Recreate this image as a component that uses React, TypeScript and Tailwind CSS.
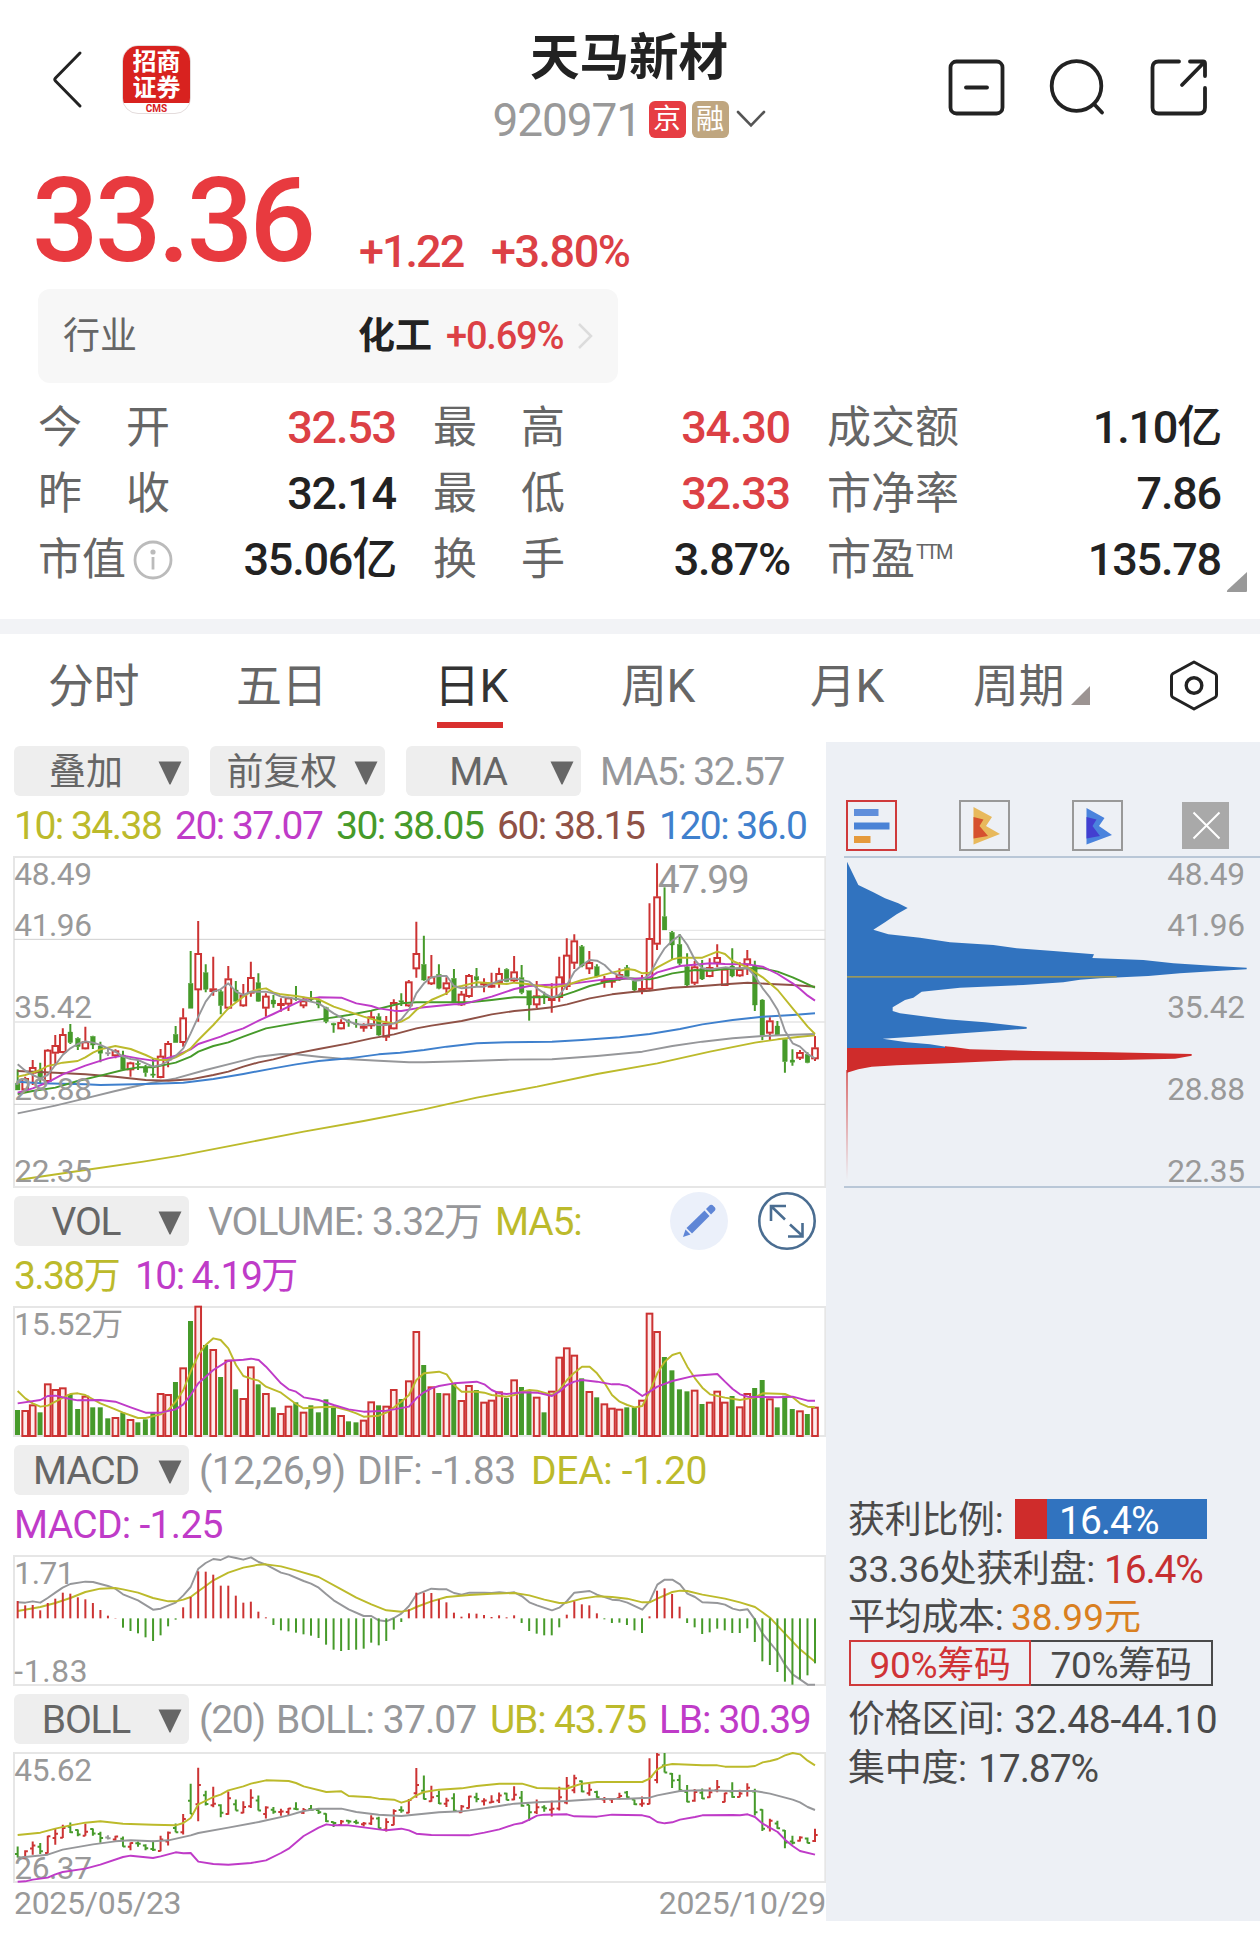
import type { ReactNode } from "react";

// [direction, high, low, body top, body bottom], chart units
type Candle = ["r" | "g" | "n", number, number, number, number];
type Point = [number, number];

const candles: Candle[] = [
  ["g", 1018, 1080, 1060, 1080], ["r", 1040, 1085, 1045, 1080], ["r", 990, 1065, 1012, 1030], ["g", 998, 1060, 1020, 1045],
  ["r", 958, 1058, 960, 1055], ["r", 915, 1008, 946, 970], ["r", 895, 970, 913, 968], ["g", 882, 942, 906, 938],
  ["g", 922, 960, 925, 950], ["r", 890, 958, 935, 957], ["g", 917, 957, 919, 945], ["g", 935, 997, 948, 970],
  ["n", 955, 978, 967, 972], ["r", 958, 985, 962, 978], ["g", 962, 1020, 975, 1018], ["r", 995, 1040, 998, 1020],
  ["g", 990, 1020, 1000, 1003], ["g", 1005, 1040, 1012, 1028], ["g", 985, 1043, 1032, 1036], ["r", 957, 1045, 978, 1043],
  ["r", 933, 1012, 940, 990], ["g", 888, 938, 913, 938], ["r", 835, 950, 863, 938], ["g", 663, 835, 760, 835],
  ["r", 573, 875, 670, 780], ["g", 703, 787, 728, 778], ["r", 680, 797, 776, 785], ["g", 780, 853, 785, 827],
  ["r", 708, 838, 746, 835], ["g", 753, 815, 780, 814], ["r", 762, 830, 795, 828], ["r", 695, 800, 742, 790],
  ["g", 730, 815, 758, 814], ["r", 790, 860, 798, 835], ["g", 795, 833, 810, 822], ["r", 805, 845, 820, 823],
  ["r", 800, 843, 803, 823], ["g", 768, 812, 805, 808], ["r", 800, 835, 812, 828], ["g", 783, 815, 806, 810],
  ["g", 805, 835, 812, 825], ["g", 830, 880, 833, 875], ["g", 878, 908, 880, 885], ["r", 868, 898, 877, 897],
  ["g", 868, 890, 873, 877], ["g", 867, 893, 880, 884], ["r", 880, 905, 888, 893], ["r", 842, 897, 860, 888],
  ["g", 850, 917, 860, 915], ["r", 858, 933, 880, 922], ["r", 808, 898, 817, 897], ["g", 790, 828, 812, 815],
  ["r", 750, 830, 755, 828], ["r", 575, 743, 670, 717], ["g", 617, 752, 703, 750], ["r", 675, 765, 740, 762],
  ["g", 703, 778, 733, 775], ["r", 742, 795, 758, 777], ["g", 717, 818, 745, 816], ["r", 783, 828, 792, 825],
  ["r", 732, 803, 736, 800], ["g", 714, 768, 740, 750], ["r", 745, 787, 758, 762], ["r", 728, 773, 765, 770],
  ["r", 713, 773, 730, 758], ["g", 715, 757, 718, 755], ["r", 678, 757, 725, 753], ["g", 705, 793, 743, 788],
  ["g", 782, 872, 782, 825], ["r", 753, 835, 797, 825], ["g", 785, 822, 797, 802], ["r", 760, 848, 805, 810],
  ["r", 680, 815, 740, 803], ["r", 625, 780, 675, 770], ["r", 613, 717, 632, 700], ["g", 645, 712, 650, 708],
  ["r", 663, 732, 697, 717], ["g", 703, 742, 710, 740], ["r", 738, 773, 750, 753], ["r", 745, 773, 750, 753],
  ["r", 715, 752, 733, 745], ["g", 705, 742, 713, 740], ["g", 752, 783, 753, 780], ["r", 735, 793, 775, 780],
  ["r", 520, 780, 625, 778], ["r", 400, 660, 500, 643], ["g", 472, 600, 560, 600], ["g", 603, 688, 607, 645],
  ["g", 612, 705, 643, 700], ["g", 670, 768, 710, 765], ["r", 693, 765, 710, 760], ["g", 690, 750, 715, 747],
  ["r", 685, 742, 712, 740], ["r", 643, 712, 682, 700], ["r", 715, 768, 717, 767], ["g", 655, 742, 708, 738],
  ["r", 697, 740, 718, 738], ["r", 660, 735, 686, 705], ["g", 692, 843, 708, 825], ["g", 808, 930, 810, 918],
  ["r", 862, 933, 872, 910], ["g", 873, 918, 888, 915], ["g", 925, 1028, 928, 995], ["g", 958, 1007, 990, 997],
  ["r", 960, 990, 967, 985], ["g", 967, 1000, 973, 998], ["r", 918, 993, 953, 987],
];

const volumes = [
  660, 663, 646, 667, 583, 600, 595, 612, 657, 620, 652, 652, 685, 684, 668, 690, 697, 688, 667, 612, 615, 576, 535, 393, 350,
  465, 480, 561, 512, 598, 627, 532, 583, 612, 652, 672, 650, 637, 668, 646, 667, 628, 653, 678, 694, 697, 692, 637, 646, 650,
  600, 627, 574, 426, 525, 592, 609, 613, 580, 633, 588, 600, 638, 632, 607, 624, 571, 591, 604, 623, 667, 605, 503, 475, 497,
  565, 606, 622, 643, 656, 659, 652, 652, 632, 371, 426, 501, 541, 598, 604, 602, 642, 638, 605, 638, 618, 652, 612, 594, 570,
  628, 652, 617, 657, 664, 672, 653,
];

const macdBars = [
  182, 195, 194, 210, 188, 175, 157, 160, 171, 177, 188, 209, 226, 233, 262, 272, 279, 291, 302, 285, 258, 238, 201, 170, 93,
  94, 103, 136, 136, 166, 187, 184, 214, 231, 254, 270, 273, 277, 282, 286, 293, 313, 328, 332, 329, 328, 325, 307, 315, 302,
  268, 245, 207, 157, 157, 158, 177, 186, 217, 229, 219, 220, 224, 230, 225, 231, 225, 248, 272, 280, 285, 285, 261, 223, 183,
  192, 195, 219, 237, 248, 247, 254, 270, 278, 228, 151, 144, 161, 199, 248, 261, 281, 276, 265, 270, 278, 278, 264, 305, 363,
  374, 395, 424, 433, 417, 405, 369,
];

const ma5: Point[] = [[53,1003],[76,1022],[98,1035],[121,1045],[143,1035],[166,1005],[188,975],[211,955],[233,942],[256,934],[279,938],[301,945],[324,955],[346,965],[369,980],[392,987],[414,990],[437,1000],[459,1010],[482,1005],[505,993],[527,978],[550,955],[572,910],[595,860],[617,815],[640,785],[662,778],[685,760],[708,785],[730,795],[753,785],[798,785],[820,790],[843,800],[866,803],[911,810],[956,820],[1001,850],[1046,875],[1069,882],[1091,885],[1114,882],[1136,885],[1159,885],[1182,880],[1204,868],[1227,840],[1249,790],[1272,760],[1294,742],[1317,738],[1340,738],[1362,768],[1385,775],[1430,770],[1453,770],[1498,752],[1543,745],[1588,755],[1611,775],[1633,790],[1656,803],[1678,795],[1701,765],[1723,725],[1746,705],[1769,690],[1791,692],[1814,705],[1836,727],[1859,737],[1882,743],[1904,752],[1927,750],[1949,733],[1972,690],[1994,655],[2017,632],[2040,615],[2062,645],[2085,690],[2107,715],[2130,718],[2175,712],[2198,715],[2243,715],[2265,738],[2288,775],[2310,803],[2333,840],[2355,903],[2378,940],[2400,950],[2423,972],[2445,985]];
const ma10: Point[] = [[53,1040],[76,1035],[98,1028],[121,1020],[143,1008],[166,1003],[188,998],[233,993],[256,982],[279,968],[301,958],[346,948],[392,957],[437,975],[459,985],[482,990],[505,990],[527,982],[550,970],[572,955],[595,930],[640,885],[685,835],[730,800],[753,785],[776,778],[798,775],[820,787],[843,793],[888,798],[933,805],[956,808],[1001,830],[1046,845],[1091,860],[1136,873],[1182,880],[1204,875],[1227,862],[1249,840],[1294,810],[1340,790],[1362,772],[1385,768],[1430,757],[1475,760],[1520,762],[1543,758],[1588,763],[1633,770],[1656,773],[1701,765],[1746,750],[1791,740],[1836,728],[1882,717],[1904,720],[1927,730],[1949,728],[1972,712],[2017,688],[2040,683],[2107,683],[2152,665],[2175,672],[2198,693],[2243,712],[2265,727],[2288,742],[2333,780],[2378,835],[2423,890],[2445,912]];
const ma20: Point[] = [[53,1088],[98,1075],[143,1057],[188,1033],[256,1007],[324,985],[369,977],[414,985],[459,992],[482,990],[527,977],[572,958],[595,942],[662,920],[685,910],[730,895],[776,872],[820,852],[866,830],[911,808],[956,802],[1024,803],[1069,820],[1114,828],[1136,835],[1182,842],[1204,843],[1249,835],[1272,832],[1362,823],[1385,823],[1430,812],[1475,800],[1543,777],[1588,768],[1633,765],[1701,763],[1746,757],[1814,748],[1882,745],[1904,747],[1949,742],[1972,727],[2040,708],[2107,702],[2130,700],[2175,702],[2243,703],[2288,710],[2333,732],[2378,760],[2400,777],[2423,797],[2445,812]];
const ma30: Point[] = [[53,1092],[98,1083],[166,1073],[233,1053],[301,1037],[369,1020],[414,1012],[459,1012],[527,998],[572,980],[595,965],[640,948],[685,937],[730,920],[798,895],[866,883],[933,872],[1001,862],[1046,855],[1114,842],[1182,825],[1204,820],[1249,817],[1340,817],[1408,817],[1475,810],[1543,802],[1611,802],[1678,800],[1723,785],[1769,768],[1836,752],[1882,745],[1949,748],[1972,743],[2017,730],[2085,720],[2130,722],[2175,717],[2243,715],[2288,715],[2333,725],[2378,742],[2400,752],[2445,773]];
const ma60: Point[] = [[53,1023],[166,1028],[256,1033],[346,1040],[437,1050],[505,1052],[572,1048],[640,1035],[685,1025],[730,1010],[776,997],[820,988],[888,970],[956,957],[1046,940],[1114,925],[1182,913],[1249,895],[1294,887],[1385,873],[1475,853],[1543,843],[1611,837],[1656,832],[1701,823],[1769,805],[1836,793],[1904,785],[1949,782],[2017,773],[2107,768],[2175,763],[2243,758],[2310,762],[2378,765],[2445,770]];
const ma120: Point[] = [[53,1055],[120,1060],[256,1063],[301,1065],[437,1062],[550,1058],[640,1047],[730,1032],[820,1015],[888,1003],[956,993],[1046,985],[1136,973],[1200,968],[1272,960],[1340,950],[1430,940],[1520,937],[1656,935],[1746,930],[1859,922],[1949,912],[2040,897],[2107,883],[2198,870],[2288,860],[2378,855],[2445,850]];
const ma180: Point[] = [[53,1150],[166,1127],[256,1105],[346,1083],[437,1062],[527,1045],[617,1020],[708,997],[776,980],[843,972],[888,973],[956,980],[1024,986],[1136,992],[1227,997],[1272,997],[1385,994],[1520,989],[1656,988],[1791,978],[1927,965],[2017,948],[2107,935],[2198,925],[2288,918],[2378,914],[2445,912]];
const ma250: Point[] = [[53,1350],[256,1320],[430,1295],[540,1277],[730,1240],[911,1205],[1091,1173],[1272,1138],[1430,1103],[1611,1070],[1791,1032],[1972,1000],[2130,965],[2265,938],[2333,928],[2400,920],[2445,916]];

const volMa5: Point[] = [[53,603],[76,625],[98,640],[121,650],[143,647],[166,635],[211,612],[233,610],[256,615],[301,640],[346,658],[369,668],[414,684],[437,684],[482,673],[505,660],[527,635],[550,600],[572,545],[595,495],[617,465],[640,445],[662,450],[685,475],[708,525],[730,558],[753,566],[776,572],[798,590],[843,608],[888,642],[911,655],[956,652],[1001,650],[1046,662],[1069,670],[1091,680],[1136,677],[1159,668],[1182,652],[1204,635],[1227,615],[1249,570],[1272,550],[1317,545],[1340,553],[1362,585],[1385,605],[1430,605],[1453,608],[1475,615],[1520,620],[1543,615],[1566,605],[1588,600],[1611,602],[1656,615],[1678,600],[1701,570],[1723,548],[1746,530],[1769,530],[1791,550],[1814,580],[1836,615],[1859,635],[1882,645],[1904,652],[1927,648],[1949,605],[1972,550],[1994,515],[2017,495],[2040,488],[2062,530],[2085,565],[2107,593],[2130,613],[2175,623],[2220,630],[2265,622],[2288,610],[2355,612],[2378,622],[2400,640],[2423,650],[2445,652]];
const volMa10: Point[] = [[53,640],[121,630],[143,618],[166,617],[211,627],[233,631],[301,630],[346,635],[392,652],[437,668],[482,668],[527,658],[550,643],[572,615],[595,580],[617,560],[640,540],[685,512],[730,509],[753,506],[776,510],[798,530],[843,580],[866,598],[888,605],[911,622],[956,630],[1001,645],[1046,658],[1091,665],[1159,662],[1182,658],[1227,650],[1249,625],[1272,607],[1294,595],[1317,588],[1362,580],[1430,575],[1453,583],[1475,600],[1498,610],[1520,612],[1566,607],[1611,608],[1656,618],[1678,605],[1701,585],[1723,575],[1746,570],[1791,575],[1836,583],[1859,583],[1882,588],[1904,602],[1927,618],[1949,605],[1972,590],[2017,573],[2085,557],[2152,552],[2175,575],[2198,597],[2220,613],[2243,620],[2333,622],[2378,620],[2423,632],[2445,632]];

const dif: Point[] = [[53,186],[76,187],[98,183],[121,187],[143,173],[166,157],[188,142],[211,131],[256,124],[279,125],[324,137],[346,145],[369,162],[414,180],[459,208],[482,205],[527,187],[550,165],[572,140],[595,85],[617,68],[640,56],[662,59],[685,48],[708,53],[730,58],[753,51],[776,65],[798,73],[843,97],[866,103],[911,122],[933,130],[956,142],[979,162],[1001,180],[1046,207],[1091,227],[1114,227],[1136,240],[1159,243],[1182,233],[1204,220],[1227,197],[1249,163],[1294,145],[1317,147],[1340,147],[1362,158],[1385,163],[1408,157],[1453,157],[1475,158],[1498,156],[1520,158],[1543,156],[1566,168],[1588,186],[1611,195],[1656,210],[1678,202],[1701,182],[1723,157],[1769,152],[1791,163],[1836,178],[1859,180],[1882,187],[1927,208],[1949,183],[1972,133],[1994,118],[2017,118],[2040,132],[2062,160],[2085,170],[2107,186],[2152,188],[2175,193],[2198,205],[2220,210],[2243,207],[2265,238],[2288,280],[2333,335],[2355,373],[2378,402],[2400,417],[2423,433],[2445,433]];
const dea: Point[] = [[53,212],[121,200],[166,188],[211,173],[256,155],[301,145],[346,143],[369,147],[414,157],[459,173],[505,183],[527,183],[550,178],[572,170],[595,153],[617,137],[640,120],[685,97],[730,82],[776,73],[798,72],[843,78],[888,90],[956,110],[1024,147],[1069,172],[1114,192],[1159,210],[1204,214],[1227,210],[1249,200],[1294,183],[1340,170],[1408,164],[1475,160],[1543,158],[1588,165],[1633,178],[1678,188],[1701,187],[1746,175],[1791,168],[1836,170],[1882,175],[1927,186],[1949,186],[1972,175],[2017,155],[2040,151],[2062,152],[2107,163],[2175,175],[2220,186],[2265,200],[2310,232],[2355,280],[2400,327],[2445,364]];

const bollUpper: Point[] = [[53,884],[121,877],[166,865],[211,855],[256,847],[301,843],[369,850],[459,853],[527,855],[550,848],[572,833],[595,792],[640,770],[662,763],[685,750],[730,738],[753,730],[798,720],[866,722],[888,728],[911,738],[979,755],[1024,753],[1046,767],[1114,771],[1136,775],[1182,778],[1204,787],[1227,780],[1249,765],[1272,755],[1317,748],[1385,744],[1430,737],[1498,730],[1566,730],[1611,743],[1701,745],[1723,737],[1746,730],[1791,725],[1927,725],[1949,715],[1972,687],[1994,675],[2017,671],[2107,675],[2152,675],[2175,679],[2243,679],[2265,677],[2288,666],[2310,662],[2333,656],[2355,645],[2378,638],[2400,642],[2423,661],[2445,675]];
const bollMid: Point[] = [[53,952],[143,943],[188,928],[279,912],[346,903],[392,900],[459,903],[505,900],[572,885],[595,878],[685,862],[776,845],[866,825],[911,812],[956,805],[1024,805],[1069,815],[1136,823],[1204,827],[1272,820],[1317,816],[1385,813],[1430,807],[1498,797],[1543,790],[1611,786],[1701,782],[1791,776],[1882,775],[1949,772],[1972,765],[2040,752],[2107,750],[2198,752],[2265,752],[2310,760],[2378,778],[2400,786],[2423,800],[2445,809]];
const bollLower: Point[] = [[53,1024],[76,1023],[98,1018],[143,1012],[166,1002],[188,995],[256,985],[301,973],[369,950],[392,946],[459,953],[482,948],[527,936],[550,939],[572,938],[595,964],[640,971],[685,973],[753,968],[798,960],[843,938],[866,925],[911,887],[956,862],[979,852],[1001,855],[1046,855],[1114,864],[1159,870],[1204,865],[1227,870],[1249,880],[1294,884],[1408,885],[1453,877],[1498,867],[1543,852],[1566,848],[1588,838],[1611,826],[1633,823],[1701,822],[1723,828],[1791,829],[1836,823],[1927,825],[1949,830],[1972,845],[1994,849],[2017,846],[2040,838],[2085,830],[2107,825],[2198,824],[2220,825],[2243,822],[2265,830],[2288,850],[2333,875],[2355,898],[2378,917],[2400,932],[2445,943]];

const RED = "#cc3333";
const GREEN = "#469a2a";
const GRAY = "#96979a";
const YELLOW = "#bcba2b";
const MAGENTA = "#bf3bc8";

const xAt = (i: number) => 53 + i * 22.566;
const colorOf = (dir: string) => (dir === "r" ? RED : dir === "g" ? GREEN : "#999999");
// candle units to the BOLL pane's own scale
const toBoll = (y: number) => 580.3 + (y - 381) * 0.5308;

function Line({ points, color }: { points: Point[]; color: string }) {
  return (
    <polyline
      points={points.map((p) => p.join(",")).join(" ")}
      fill="none"
      stroke={color}
      strokeWidth={5.8}
      strokeLinejoin="round"
    />
  );
}

function AxisLabel({ x = 43, y, children }: { x?: number; y: number; children: ReactNode }) {
  return (
    <text x={x} y={y} fontSize={95} fill="#999999" letterSpacing={-1.4}>
      {children}
    </text>
  );
}

function Frame({ y, height }: { y: number; height: number }) {
  return <rect x={42} y={y} width={2434} height={height} fill="none" stroke="#e6e6e6" strokeWidth={6} />;
}

function PriceChart() {
  return (
    <svg viewBox="42 381 2436 990" className="h-[330px] w-[812px] overflow-visible">
      <Frame y={381} height={990} />
      <path d="M42 628H2476M42 1123H2476" stroke="#cfcfcf" strokeWidth={3} />
      <path d="M42 876H2476" stroke="#e4e4e4" strokeWidth={5} />
      <path d="M2005 601H2476" stroke="#e2e2e2" strokeWidth={3} />
      {candles.map(([dir, high, low, top, bottom], i) => {
        const x = xAt(i);
        const color = colorOf(dir);
        return (
          <g key={i} stroke={color}>
            <path d={`M${x} ${high}V${top}M${x} ${bottom}V${low}`} strokeWidth={6} />
            {dir === "r" ? (
              <rect x={x - 8.5} y={top + 2} width={17} height={Math.max(bottom - top - 4, 3)} fill="#fff" strokeWidth={6} />
            ) : (
              <rect x={x - 7} y={top} width={14} height={Math.max(bottom - top, 4)} fill={color} strokeWidth={1} />
            )}
          </g>
        );
      })}
      <Line points={ma250} color={YELLOW} />
      <Line points={ma180} color={GRAY} />
      <Line points={ma120} color="#3f80cd" />
      <Line points={ma60} color="#8f5146" />
      <Line points={ma30} color={GREEN} />
      <Line points={ma20} color={MAGENTA} />
      <Line points={ma10} color={YELLOW} />
      <Line points={ma5} color={GRAY} />
      <AxisLabel y={465}>48.49</AxisLabel>
      <AxisLabel y={618}>41.96</AxisLabel>
      <AxisLabel y={864}>35.42</AxisLabel>
      <AxisLabel y={1109}>28.88</AxisLabel>
      <AxisLabel y={1356}>22.35</AxisLabel>
      <text x={1973} y={488} fontSize={117} fill="#999999" letterSpacing={-4.5}>
        47.99
      </text>
    </svg>
  );
}

function VolumeChart() {
  return (
    <svg viewBox="42 351 2436 387" className="h-[129px] w-[812px] overflow-visible">
      <Frame y={351} height={387} />
      <AxisLabel y={435}>15.52万</AxisLabel>
      {volumes.map((top, i) => {
        const x = xAt(i);
        return candles[i][0] === "r" ? (
          <rect key={i} x={x - 8.5} y={top} width={17} height={738 - top} fill="#fdecec" stroke={RED} strokeWidth={6} />
        ) : (
          <rect key={i} x={x - 8} y={top} width={15} height={735 - top} fill={GREEN} />
        );
      })}
      <Line points={volMa5} color={YELLOW} />
      <Line points={volMa10} color={MAGENTA} />
    </svg>
  );
}

function MacdChart() {
  return (
    <svg viewBox="42 47 2436 387" className="h-[129px] w-[812px] overflow-visible">
      <Frame y={47} height={387} />
      <AxisLabel y={132}>1.71</AxisLabel>
      <text x={43} y={426} fontSize={95} fill="#999999" letterSpacing={2}>
        -1.83
      </text>
      <Line points={dif} color={GRAY} />
      <Line points={dea} color={YELLOW} />
      {macdBars.map((end, i) => (
        <path key={i} d={`M${xAt(i)} 234V${end}`} stroke={end < 234 ? RED : GREEN} strokeWidth={6} />
      ))}
    </svg>
  );
}

function BollChart() {
  return (
    <svg viewBox="42 638 2436 387" className="h-[129px] w-[812px] overflow-visible">
      <clipPath id="boll">
        <rect x={42} y={638} width={2436} height={390} />
      </clipPath>
      <Frame y={638} height={387} />
      <AxisLabel y={722}>45.62</AxisLabel>
      <AxisLabel y={1016}>26.37</AxisLabel>
      <g clipPath="url(#boll)" strokeWidth={6}>
        {candles.map(([dir, high, low, top, bottom], i) => {
          const x = xAt(i);
          const open = toBoll(dir === "r" ? bottom : top);
          const close = toBoll(dir === "r" ? top : bottom);
          return (
            <path
              key={i}
              d={`M${x} ${toBoll(high)}V${toBoll(low)}M${x - 8} ${open}H${x}M${x} ${close}H${x + 8}`}
              stroke={colorOf(dir)}
            />
          );
        })}
      </g>
      <Line points={bollUpper} color={YELLOW} />
      <Line points={bollMid} color={GRAY} />
      <Line points={bollLower} color={MAGENTA} />
    </svg>
  );
}

// cost distribution, drawn on the same price scale as the main chart
function ChipDistribution() {
  return (
    <svg viewBox="72 381 1248 990" className="ml-[18px] h-[330px] w-[416px] overflow-visible">
      <defs>
        <linearGradient id="tail" x1="0" y1="0" x2="0" y2="1">
          <stop offset="0" stopColor="#cf2c2b" />
          <stop offset="1" stopColor="#cf2c2b" stopOpacity="0" />
        </linearGradient>
      </defs>
      <path d="M72 381H1320M72 1371H1320" stroke="#b9c7d7" strokeWidth={6} />
      <path
        d="M81 395L115 465L160 487L195 505L235 520L263 534L230 553L195 577L160 599L205 613L300 623L390 637L520 645L590 655L700 663L822 673L817 684L970 690L1060 700L1200 709L1280 713V718L1190 723L1080 730L985 738L840 745L780 749L730 757L610 765L420 773L305 785L280 803L255 810L218 832V843L240 850L380 868L495 877L620 891V896L510 904L280 920L188 926L260 937L330 943L400 954H81Z"
        fill="#3173bf"
      />
      <path
        d="M81 954H375V949L400 951L450 958L640 963L870 967L1115 972V977L1065 986L900 990L580 991L400 999L230 1006L155 1010L115 1018L81 1028Z"
        fill="#cf2c2b"
      />
      <rect x={79} y={1020} width={4} height={330} fill="url(#tail)" />
      <path d="M81 740.500H890" stroke="#bda53f" strokeWidth={4} />
      <AxisLabel x={1042} y={465}>48.49</AxisLabel>
      <AxisLabel x={1042} y={618}>41.96</AxisLabel>
      <AxisLabel x={1042} y={864}>35.42</AxisLabel>
      <AxisLabel x={1042} y={1109}>28.88</AxisLabel>
      <AxisLabel x={1042} y={1356}>22.35</AxisLabel>
    </svg>
  );
}

function Selector({ children }: { children: ReactNode }) {
  return (
    <div className="flex h-[50px] w-[175px] shrink-0 items-center rounded-md bg-[#eeeeee] text-[#666]">
      <span className="w-[144px] pt-[3px] text-center">{children}</span>
      <svg viewBox="0 0 24 24" className="mt-[3px] size-6" fill="#666">
        <path d="M0.500 0.500H23.500L12.500 23.500H11.500Z" />
      </svg>
    </div>
  );
}

function Quote({ label, value, up }: { label: ReactNode; value: string; up?: boolean }) {
  return (
    <div className="flex h-[66px] items-center justify-between">
      <span className="flex items-center text-[44px] leading-none text-[#666]">{label}</span>
      <span
        className={`pb-[2px] text-[45px] leading-none font-medium tracking-[-1.2px] ${up ? "text-[#dc4045]" : "text-[#222]"}`}
      >
        {value}
      </span>
    </div>
  );
}

function Wide({ a, b }: { a: string; b: string }) {
  return (
    <span className="flex w-[132px] justify-between">
      <span>{a}</span>
      <span>{b}</span>
    </span>
  );
}

function Header() {
  return (
    <header className="flex h-[160px] justify-between pr-[53px] pl-[51px]">
      <div className="flex w-[350px] items-start pt-[45px]">
        <svg viewBox="0 0 32 60" className="mt-[4px] h-[60px] w-8" fill="none" stroke="#222" strokeWidth={3}>
          <path d="M29 4L4.500 29Q3 30.500 4.500 32L29 57" strokeLinecap="round" />
        </svg>
        <div className="ml-[39px] flex h-[69px] w-[69px] flex-col items-center overflow-hidden rounded-2xl border border-[#e4dcdc] bg-white">
          <div className="flex h-[57px] w-[69px] shrink-0 flex-col items-center bg-[#d8221f] pt-[3px] text-[24px] leading-[26px] font-bold text-white">
            <span className="h-[26px] overflow-hidden">招商</span>
            <span className="h-[26px] overflow-hidden">证券</span>
          </div>
          <span className="text-[10px] leading-[11px] font-bold text-[#d8221f]">CMS</span>
        </div>
      </div>
      <div className="flex flex-col items-center pt-[31px]">
        <h1 className="text-[49.5px] leading-[54px] font-bold text-[#222]">天马新材</h1>
        <div className="mt-[7px] flex items-center">
          <span className="w-[156px] pt-[2px] text-[46px] leading-[52px] tracking-[-1.1px] text-[#999]">920971</span>
          <span className="flex h-[37px] w-[37px] items-center justify-center rounded-md bg-[#e63d43] pt-px text-[28px] leading-none text-white">
            京
          </span>
          <span className="ml-[6px] flex h-[37px] w-[37px] items-center justify-center rounded-md bg-[#bfa680] pt-px text-[28px] leading-none text-white">
            融
          </span>
          <svg viewBox="0 0 30 18" className="ml-[7px] h-[18px] w-[30px]" fill="none" stroke="#555" strokeWidth={2.6}>
            <path d="M2 2L15 15.500L28 2" strokeLinecap="round" />
          </svg>
        </div>
      </div>
      <div className="flex w-[350px] items-start justify-end gap-[44px] pt-[59px]">
        <svg viewBox="0 0 57 57" className="size-[57px]" fill="none" stroke="#222" strokeWidth={3.8}>
          <rect x="2.500" y="2.500" width="52" height="52" rx="6" />
          <path d="M18 28.500H39" strokeLinecap="round" />
        </svg>
        <svg viewBox="0 0 57 57" className="size-[57px]" fill="none" stroke="#222" strokeWidth={3.8}>
          <circle cx="27.500" cy="27" r="24.800" />
          <path d="M45 45L53 53.500" strokeLinecap="round" />
        </svg>
        <svg viewBox="0 0 57 57" className="size-[57px]" fill="none" stroke="#222" strokeWidth={3.8} strokeLinecap="round">
          <path d="M29 2.500H8.500Q2.500 2.500 2.500 8.500V48.500Q2.500 54.500 8.500 54.500H49Q55 54.500 55 48.500V29" />
          <path d="M40 2.500H53Q55 2.500 55 4.500V17M54 3.500L32 26" />
        </svg>
      </div>
    </header>
  );
}

function Summary() {
  return (
    <section className="h-[459px]">
      <div className="flex h-[129px] items-start pl-[32px] font-medium text-[#e83a3f]">
        <span className="w-[327px] pt-[3px] text-[117px] leading-none tracking-[-3.6px]">33.36</span>
        <span className="w-[132px] pt-[69px] text-[45px] leading-none tracking-[-2px] text-[#dc4045]">+1.22</span>
        <span className="pt-[69px] text-[45px] leading-none tracking-[-1.5px] text-[#dc4045]">+3.80%</span>
      </div>
      <div className="ml-[38px] flex h-[94px] w-[580px] items-center rounded-xl bg-[#f7f7f7] pl-[25px] leading-none">
        <span className="w-[295px] text-[37px] text-[#666]">行业</span>
        <span className="w-[88px] text-[37px] font-bold text-[#222]">化工</span>
        <span className="w-[131px] text-[38px] font-medium tracking-[-1.2px] text-[#dc4045]">+0.69%</span>
        <svg viewBox="0 0 16 28" className="h-[28px] w-4" fill="none" stroke="#dcdcdc" strokeWidth={2.5}>
          <path d="M2 2L14 14L2 26" />
        </svg>
      </div>
      <div className="flex items-end pt-[12px] pl-[38px]">
        <div className="w-[358px]">
          <Quote label={<Wide a="今" b="开" />} value="32.53" up />
          <Quote label={<Wide a="昨" b="收" />} value="32.14" />
          <Quote
            label={
              <>
                市值
                <svg viewBox="0 0 40 40" className="ml-[7px] size-[40px]" fill="none" stroke="#bbb" strokeWidth={2.8}>
                  <circle cx="20" cy="20" r="18" />
                  <path d="M20 17V29.500" />
                  <circle cx="20" cy="12" r="1.200" fill="#bbb" />
                </svg>
              </>
            }
            value="35.06亿"
          />
        </div>
        <div className="ml-[37px] w-[357px]">
          <Quote label={<Wide a="最" b="高" />} value="34.30" up />
          <Quote label={<Wide a="最" b="低" />} value="32.33" up />
          <Quote label={<Wide a="换" b="手" />} value="3.87%" />
        </div>
        <div className="ml-[37px] w-[394px]">
          <Quote label="成交额" value="1.10亿" />
          <Quote label="市净率" value="7.86" />
          <Quote
            label={
              <>
                市盈
                <span className="mb-4 ml-px text-[20px] tracking-[-2px]">TTM</span>
              </>
            }
            value="135.78"
          />
        </div>
        <svg viewBox="0 0 22 22" className="ml-[5px] size-[22px]" fill="#999">
          <path d="M21 1V20Q21 21 20 21H2Q0 21 1.500 19Z" />
        </svg>
      </div>
    </section>
  );
}

function Tabs() {
  return (
    <nav className="flex h-[108px] items-start pt-[25px] pl-[48px] text-[46px] leading-[54px] tracking-[-0.6px] text-[#666]">
      <span className="w-[188px]">分时</span>
      <span className="w-[198px]">五日</span>
      <span className="flex w-[187px] flex-col text-[#333]">
        日K
        <span className="mt-[9px] ml-[3px] h-[6px] w-[66px] bg-[#d9302f]" />
      </span>
      <span className="w-[189px]">周K</span>
      <span className="w-[163px]">月K</span>
      <span className="w-[98px]">周期</span>
      <svg viewBox="0 0 20 20" className="mt-[27px] size-[19px]" fill="#9c9492">
        <path d="M20 0V20H0Z" />
      </svg>
      <svg viewBox="0 0 50 54" className="ml-[79px] h-[54px] w-[50px]" fill="none" stroke="#222" strokeWidth={3}>
        <path d="M25 3L46 14.500Q47.500 15.500 47.500 17V36Q47.500 37.500 46 38.500L25 50L4 38.500Q2.500 37.500 2.500 36V17Q2.500 15.500 4 14.500Z" strokeLinejoin="round" />
        <circle cx="25" cy="26.500" r="7.800" strokeWidth={3.4} />
      </svg>
    </nav>
  );
}

function Charts() {
  return (
    <div className="w-[826px] shrink-0 pt-1 pl-[14px] text-[39px] leading-none tracking-[-1.2px] whitespace-nowrap text-[#96979a]">
      <div className="flex h-[50px] items-center">
        <Selector>
          <span className="text-[37px] tracking-normal">叠加</span>
        </Selector>
        <div className="ml-[21px]">
          <Selector>
            <span className="text-[37px] tracking-normal">前复权</span>
          </Selector>
        </div>
        <div className="ml-[21px]">
          <Selector>MA</Selector>
        </div>
        <span className="ml-[19px] pt-[3px] tracking-[-1.5px]">MA5: 32.57</span>
      </div>
      <div className="flex h-[61px] items-center pb-[1px] tracking-[-1.5px]">
        <span className="w-[161px] text-[#bcba2b]">10: 34.38</span>
        <span className="w-[161px] text-[#bf3bc8]">20: 37.07</span>
        <span className="w-[161px] text-[#469a2a]">30: 38.05</span>
        <span className="w-[162px] text-[#8f5146]">60: 38.15</span>
        <span className="text-[#3f80cd]">120: 36.0</span>
      </div>
      <PriceChart />
      <div className="mt-[9px] flex h-[50px] items-center">
        <Selector>VOL</Selector>
        <span className="ml-[19px] w-[287px] pt-[3px] tracking-[-1px]">VOLUME: 3.32万</span>
        <span className="w-[175px] pt-[3px] text-[#bcba2b]">MA5:</span>
        <svg viewBox="0 0 58 58" className="size-[58px]">
          <circle cx="29" cy="29" r="29" fill="#ebf0fa" />
          <path d="M36 17L40 13Q42 12 43.500 14L45 15.500Q46 17 45 18.500L41 22.500Z" fill="#5f86d6" />
          <path d="M34.500 18.500L39.500 24L22 41.500L16.500 36Z" fill="#5f86d6" />
          <path d="M15.500 37.500L20.500 42.500L13 45Z" fill="#5f86d6" />
        </svg>
        <svg viewBox="0 0 58 58" className="ml-[30px] size-[58px]" fill="none" stroke="#4a6d91" strokeWidth={2.6}>
          <circle cx="29" cy="29" r="27.700" />
          <path d="M27 27.500L13.500 14.500M13 29V14H28M32 32.500L44 43.500M44.500 31V44.500H30" />
        </svg>
      </div>
      <div className="flex h-[61px] items-center pb-[1px] tracking-[-1.6px]">
        <span className="w-[121px] text-[#bcba2b]">
          3.38<span className="text-[37px]">万</span>
        </span>
        <span className="text-[#bf3bc8]">
          10: 4.19<span className="text-[37px]">万</span>
        </span>
      </div>
      <VolumeChart />
      <div className="mt-[9px] flex h-[50px] items-center">
        <Selector>MACD</Selector>
        <span className="ml-[10px] w-[158px] pt-[3px] tracking-[-0.6px]">(12,26,9)</span>
        <span className="w-[174px] pt-[3px] tracking-[-0.5px]">DIF: -1.83</span>
        <span className="pt-[3px] tracking-[-0.3px] text-[#bcba2b]">DEA: -1.20</span>
      </div>
      <div className="flex h-[61px] items-center pb-[1px]">
        <span className="tracking-[-0.7px] text-[#bf3bc8]">MACD: -1.25</span>
      </div>
      <MacdChart />
      <div className="mt-[9px] flex h-[50px] items-center">
        <Selector>BOLL</Selector>
        <span className="ml-[10px] w-[77px] pt-[3px]">(20)</span>
        <span className="w-[214px] pt-[3px] tracking-[-0.9px]">BOLL: 37.07</span>
        <span className="w-[169px] pt-[3px] text-[#bcba2b]">UB: 43.75</span>
        <span className="pt-[3px] text-[#bf3bc8]">LB: 30.39</span>
      </div>
      <div className="pt-[9px]">
        <BollChart />
      </div>
      <div className="mt-[5px] flex justify-between text-[32px] tracking-[-0.3px] text-[#999]">
        <span>2025/05/23</span>
        <span>2025/10/29</span>
      </div>
    </div>
  );
}

function ChipPanel() {
  return (
    <aside className="h-[1179px] flex-1 bg-[#edf0f5] whitespace-nowrap">
      <div className="flex h-[115px] items-start pt-[58px] pl-[20px]">
        <svg viewBox="0 0 51 51" className="size-[51px]">
          <rect x="1" y="1" width="49" height="49" fill="none" stroke="#cf3a3b" strokeWidth={2} />
          <path d="M8 12.500H32.500" stroke="#5f8edb" strokeWidth={7} />
          <path d="M8 26H43.500" stroke="#4a83d6" strokeWidth={7} />
          <path d="M8 39.500H24.500" stroke="#e59a3c" strokeWidth={7} />
        </svg>
        <svg viewBox="0 0 51 51" className="ml-[62px] size-[51px]">
          <rect x="1" y="1" width="49" height="49" fill="none" stroke="#999" strokeWidth={2} />
          <path d="M14.500 7L33 17L27 26L41 34L14.500 44.500Z" fill="#e8b95c" />
          <path d="M14.500 17L24.500 19.500L20.500 26L29 36L14.500 38.500Z" fill="#d6512f" />
        </svg>
        <svg viewBox="0 0 51 51" className="ml-[62px] size-[51px]">
          <rect x="1" y="1" width="49" height="49" fill="none" stroke="#999" strokeWidth={2} />
          <path d="M14.500 8L32.500 18L27 26L40 35L14.500 44.500Z" fill="#4a83dd" />
          <path d="M14.500 17L24.500 19.500L20.500 26L28 36L14.500 38.500Z" fill="#433fd0" />
        </svg>
        <svg viewBox="0 0 47 47" className="mt-[2px] ml-[59px] size-[47px]">
          <rect width="47" height="47" fill="#a9a9a9" />
          <path d="M11.500 10.500L37.500 36.500M37.500 10.500L11.500 36.500" stroke="#fff" strokeWidth={2} />
        </svg>
      </div>
      <ChipDistribution />
      <div className="flex flex-col pt-[310px] pl-[22px] text-[37px] leading-[48px] tracking-[-0.3px] text-[#4a4a4a]">
        <div className="flex h-[44px] items-center">
          <span className="w-[167px] pt-[4px]">获利比例:</span>
          <span className="flex h-[40px] w-[192px] items-center bg-[#3173bf] text-[39px] leading-none tracking-[-1px] text-white">
            <span className="h-full w-[32px] bg-[#cf2c2b]" />
            <span className="ml-[12px] pt-[4px]">16.4%</span>
          </span>
        </div>
        <div className="flex h-[48px] items-center pt-[9px]">
          <span className="w-[256px]">33.36处获利盘:</span>
          <span className="text-[39px] tracking-[-1.2px] text-[#c62f31]">16.4%</span>
        </div>
        <div className="flex h-[48px] items-center pt-[9px]">
          <span className="w-[163px]">平均成本:</span>
          <span className="tracking-normal text-[#d98021]">38.99元</span>
        </div>
        <div className="mt-[3px] ml-px flex h-[46px] text-center">
          <span className="w-[182px] border-2 border-[#cf3a3b] pt-[3px] leading-[42px] text-[#d03336]">90%筹码</span>
          <span className="w-[182px] border-2 border-l-0 border-[#4a4a4a] pt-[3px] leading-[42px]">70%筹码</span>
        </div>
        <div className="mt-[10px] flex h-[48px] items-center">
          <span className="w-[166px]">价格区间:</span>
          <span className="text-[39px] tracking-[-0.3px]">32.48-44.10</span>
        </div>
        <div className="flex h-[48px] items-center pt-px">
          <span className="w-[130px]">集中度:</span>
          <span className="text-[39px] tracking-[-1.1px]">17.87%</span>
        </div>
      </div>
    </aside>
  );
}

export default function App() {
  return (
    <main className="h-[1944px] w-[1260px] overflow-hidden bg-white font-[Roboto,'Noto_Sans_CJK_SC',sans-serif]">
      <Header />
      <Summary />
      <div className="h-[15px] bg-[#f2f3f6]" />
      <Tabs />
      <div className="flex">
        <Charts />
        <ChipPanel />
      </div>
    </main>
  );
}
